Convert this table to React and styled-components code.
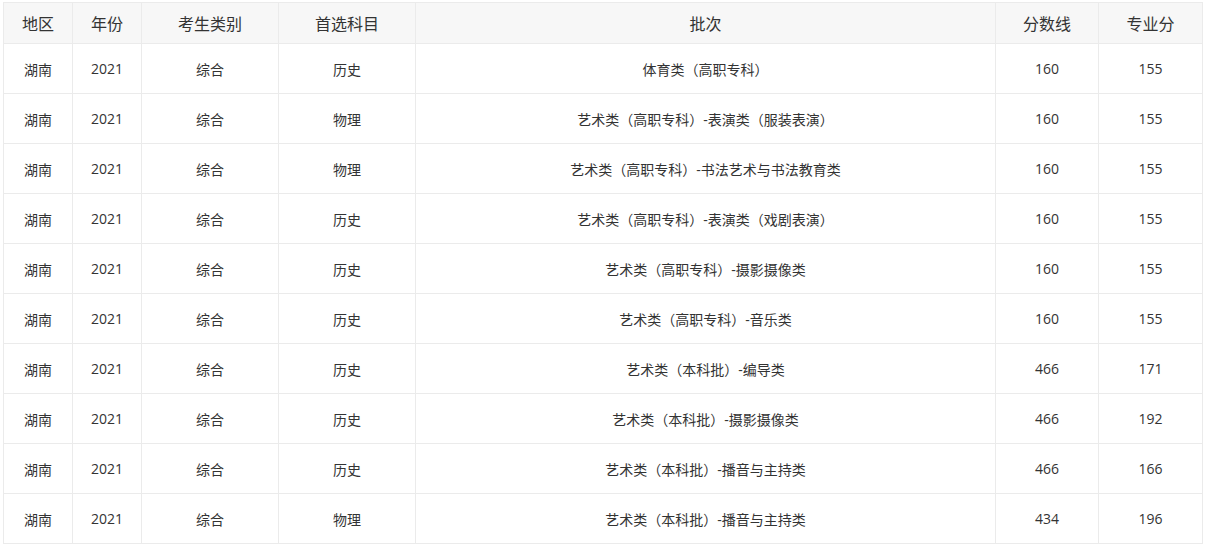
import React from "react";
import styled, { createGlobalStyle } from "styled-components";

const Global = createGlobalStyle`
  html, body { margin: 0; padding: 0; background: #fff; }
  body { font-family: "Open Sans", "Noto Sans CJK SC", sans-serif; color: #333; }
`;

const Wrap = styled.div`
  padding: 2px 0 0 3px;
`;

const Table = styled.table`
  border-collapse: collapse;
  table-layout: fixed;
  width: 1200px;
`;

const Th = styled.th`
  height: 40px;
  padding: 0;
  background: #f7f7f7;
  border: 1px solid #ebebeb;
  font-weight: normal;
  font-size: 16px;
  color: #333;
  text-align: center;
  vertical-align: middle;
`;

const Td = styled.td`
  height: 49px;
  padding: 0;
  border: 1px solid #ebebeb;
  font-size: 14px;
  color: #333;
  text-align: center;
  vertical-align: middle;
`;

const widths = [69, 69, 137, 137, 580, 103, 104];
const heads = ["地区", "年份", "考生类别", "首选科目", "批次", "分数线", "专业分"];

const rows = [
  ["历史", "体育类（高职专科）", "160", "155"],
  ["物理", "艺术类（高职专科）-表演类（服装表演）", "160", "155"],
  ["物理", "艺术类（高职专科）-书法艺术与书法教育类", "160", "155"],
  ["历史", "艺术类（高职专科）-表演类（戏剧表演）", "160", "155"],
  ["历史", "艺术类（高职专科）-摄影摄像类", "160", "155"],
  ["历史", "艺术类（高职专科）-音乐类", "160", "155"],
  ["历史", "艺术类（本科批）-编导类", "466", "171"],
  ["历史", "艺术类（本科批）-摄影摄像类", "466", "192"],
  ["历史", "艺术类（本科批）-播音与主持类", "466", "166"],
  ["物理", "艺术类（本科批）-播音与主持类", "434", "196"],
];

export default function App() {
  return (
    <Wrap>
      <Global />
      <Table>
        <colgroup>
          {widths.map((w, i) => (
            <col key={i} style={{ width: w }} />
          ))}
        </colgroup>
        <thead>
          <tr>
            {heads.map((h) => (
              <Th key={h}>{h}</Th>
            ))}
          </tr>
        </thead>
        <tbody>
          {rows.map((r, i) => (
            <tr key={i}>
              <Td>湖南</Td>
              <Td>2021</Td>
              <Td>综合</Td>
              <Td>{r[0]}</Td>
              <Td>{r[1]}</Td>
              <Td>{r[2]}</Td>
              <Td>{r[3]}</Td>
            </tr>
          ))}
        </tbody>
      </Table>
    </Wrap>
  );
}
